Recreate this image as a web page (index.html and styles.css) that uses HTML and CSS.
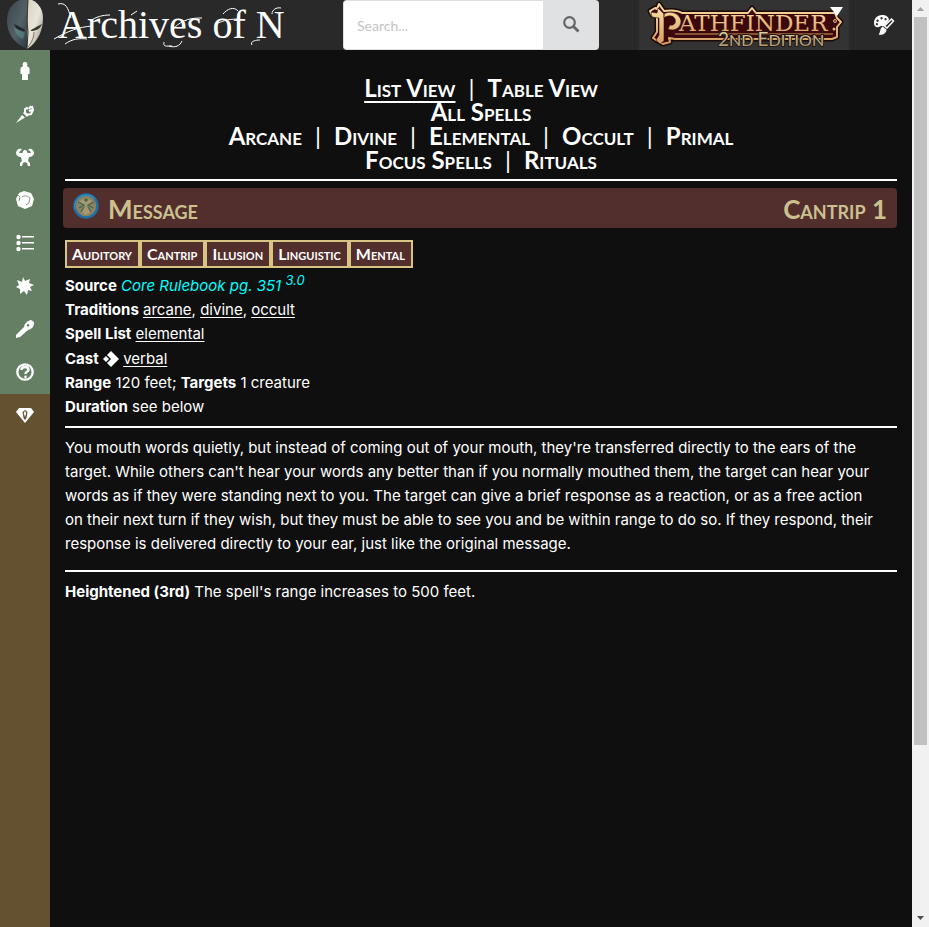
FILE: index.html
```html
<!DOCTYPE html>
<html lang="en">
<head>
<meta charset="utf-8">
<title>Message - Spells - Archives of Nethys</title>
<meta name="viewport" content="width=device-width, initial-scale=1">
<link rel="stylesheet" href="styles.css">
</head>
<body>
<div class="page">
  <header class="topbar">
    <a class="brand" href="#">
      <svg class="mask" viewBox="0 0 50 50" aria-hidden="true">
        <defs>
          <linearGradient id="dark" x1="0" y1="0" x2="1" y2="1"><stop offset="0" stop-color="#39464c"/><stop offset=".55" stop-color="#536167"/><stop offset="1" stop-color="#26383c"/></linearGradient>
          <linearGradient id="pale" x1="0" y1="0" x2="1" y2="1"><stop offset="0" stop-color="#d8d2c3"/><stop offset=".5" stop-color="#e9e5da"/><stop offset="1" stop-color="#8f8676"/></linearGradient>
        </defs>
        <path fill="url(#dark)" d="M28 0H20C12 3 7 10 7 21c0 11 6 22 20 28z"/>
        <path fill="url(#pale)" d="M28 0h4c7 3 11 10 11 18 0 12-5 24-16 31z"/>
        <path fill="#1c2325" d="M14 24l4 2 7 4v1c-5 0-9-2-11-7z"/>
        <path fill="#3d352b" d="M42 24l-4 2-7 4v1c5 0 9-2 11-7z"/>
        <path fill="#5d9496" d="M14 28l11 5-2 6c-5-2-8-6-9-11z" opacity=".55"/>
        <path fill="none" stroke="#3a3430" d="M28 0l-1 20 1 12-1 17"/>
        <path fill="none" stroke="#7d7465" d="M34 32c0 5-2 10-6 15"/>
      </svg>
      <span class="brand-name">Archives of N<svg class="swashes" viewBox="0 0 230 50" aria-hidden="true"><path d="M4 2c8-2 10 4 13 14M0 37c14-8 25-12 38-13M11 42c7-5 14-6 22-5M36 19c6-4 12-6 20-6M77 13l6-4M118 44c-6 0-9 1-8-4M120 26c9-9 18-10 28-10M128 39c-2 5-7 7-13 5M184 9c-4-5-11-2-15 3M162 22c8-4 14-5 24-5M218 12c0-4 4-7 9-6M198 43c-2-3 2-5 8-5"/></svg></span>
    </a>
    <form class="search" role="search" onsubmit="return false">
      <input type="search" aria-label="Search" placeholder="Search...">
      <button type="submit" aria-label="Search">
        <svg viewBox="0 0 18 18" aria-hidden="true"><circle cx="7.500" cy="6.500" r="5.300" fill="none" stroke="#666" stroke-width="2.200"/><path d="M11.500 10.500l5 5" stroke="#666" stroke-width="2.800"/></svg>
      </button>
    </form>
    <a class="edition" href="#">
      <svg viewBox="0 0 210 50" role="img" aria-label="Pathfinder 2nd Edition">
        <defs>
          <linearGradient id="gold" x1="0" y1="0" x2="0" y2="1"><stop offset="0" stop-color="#fbdfa4"/><stop offset="1" stop-color="#d39c60"/></linearGradient>
          <linearGradient id="stone" x1="0" y1="0" x2="0" y2="1"><stop offset="0" stop-color="#eee2bd"/><stop offset="1" stop-color="#9f8a66"/></linearGradient>
        </defs>
        <path fill="#3b080b" stroke="#1c0908" stroke-width="5" stroke-linejoin="round" d="M20 4l5 7c7-1 13-1 18 2h66l4-5 4 5h79l2 5 4 4-4 5v10l-5 2H36l-6-1 1 4-7 2-7-4-3-2 4-6V17l-5-2-2-4 5-3 2 1z"/>
        <path fill="#3b080b" stroke="url(#gold)" stroke-width="2" stroke-linejoin="round" d="M20 4l5 7c7-1 13-1 18 2h66l4-5 4 5h79l2 5 4 4-4 5v10l-5 2H36l-6-1 1 4-7 2-7-4-3-2 4-6V17l-5-2-2-4 5-3 2 1z"/>
        <path fill="none" stroke="#d59b5d" d="M36 34h158"/>
        <path fill="url(#gold)" stroke="#35100c" stroke-width=".6" d="M19 8l6 6v27l-4 3-4-4 3-5V18l-7-1-1-5 6 1zM25 14c6-4 16-1 17 7 0 7-7 11-13 8l2-4c5 1 6-3 5-6-2-4-7-4-11-1z"/>
        <circle cx="196" cy="21" r="1.500" fill="#5c302a" stroke="#ddb079"/>
        <circle cx="195" cy="29" r="1.500" fill="#e5b77b"/>
        <text class="edition-title" x="40" y="31">ATHFINDER</text>
        <text class="edition-sub" x="79" y="46"><tspan class="cap">2</tspan>ND <tspan class="cap">E</tspan>DITION</text>
        <path fill="#fff" d="M191 7h13l-6 9z"/>
      </svg>
    </a>
    <button class="theme" type="button" aria-label="Change theme">
      <svg viewBox="0 0 22 22" aria-hidden="true">
        <path fill="#fff" fill-rule="evenodd" d="M9 1C4 1 1 5 1 9c0 3 2 5 5 4 3-2 3 0 5-1l5-6c0-3-3-5-7-5zM4.500 5.500a1.200 1.200 0 1 0 .1 0zM8.500 3a1.200 1.200 0 1 0 .1 0zM3.800 9a1.100 1.100 0 1 0 .1 0zM12.500 4a1.100 1.100 0 1 0 .1 0z"/>
        <path fill="#292929" stroke="#fff" stroke-width="1.500" d="M18.500 5l2 2-6.500 7-2.500-2z"/>
        <path fill="#fff" d="M9.500 12.500l4 3c0 4-4 6-8 5 2-1 1-6 4-8z"/>
      </svg>
    </button>
  </header>
  <div class="body">
    <nav class="sidebar" aria-label="Sections">
      <div class="group rules">
        <a href="#" aria-label="Character"><svg viewBox="0 0 18 18"><circle cx="9" cy="2.400" r="2.400"/><path d="M7 4h4l2.500 2v6H12v6H6v-6H4.500V6z"/></svg></a>
        <a href="#" aria-label="Equipment"><svg viewBox="0 0 18 18"><path d="M0 18l6-8 3 2.500z"/><path d="M7 8l4 4 1.500-2L9 6z"/><path fill="none" stroke="#fff" stroke-width="2" d="M9 9V4l2-1 1 1M10 10l5-1 2-4-1-4M13 4l2-3M13 6l3-1"/></svg></a>
        <a href="#" aria-label="Monsters"><svg viewBox="0 0 18 18"><path d="M9 2c1.500 0 2 1 2.500 3L15 5l-1-2-2-1c2-3 6 0 6 3 0 2-2 4-5 4l-1 4 2 2v3h-2l-1-3-2-1-2 1-1 3H4v-3l2-2-1-4C2 9 0 7 0 5c0-3 4-6 6-3L4 3 3 5l3.500 0C7 3 7.500 2 9 2z"/></svg></a>
        <a href="#" aria-label="Rules"><svg viewBox="0 0 18 18"><path d="M8 0l7 2 3 6-2 7-7 3-7-3-2-7 3-6z"/><path fill="none" stroke="#647f64" stroke-width=".8" d="M6 6c3-2 6-1 8 1l-1 5-3 2M2 4l2 2-1 4"/></svg></a>
        <a href="#" aria-label="Lists"><svg viewBox="0 0 18 18"><circle cx="2.500" cy="3" r="2.200"/><circle cx="2.500" cy="9" r="2.200"/><circle cx="2.500" cy="15" r="2.200"/><path d="M6 2h12v1.500H6zM6 8h12v1.500H6zM6 14h12v1.500H6z"/></svg></a>
        <a href="#" aria-label="Spells"><svg viewBox="0 0 18 18"><path d="M7 0l2 4 5-2-1 4 5 2-4 2 2 4-4-1-1 5-3-4-4 3 0-5-4-2 3-2-2-5 5 2z"/></svg></a>
        <a href="#" aria-label="Tools"><svg viewBox="0 0 18 18"><path fill-rule="evenodd" d="M0 18v-3l8-8c1-4 3-6 7-7l3 2c0 5-2 7-6 8l-8 7zM12 4a1.300 1.300 0 1 0 .1 0z"/></svg></a>
        <a href="#" aria-label="Help"><svg viewBox="0 0 18 18"><circle cx="9" cy="9" r="7.700" fill="none" stroke="#fff" stroke-width="2.300"/><path fill="none" stroke="#fff" stroke-width="2.400" d="M5.500 7c0-4 7-4 7 0 0 2-3 1-3 4"/><circle cx="9.500" cy="13.700" r="1.300"/></svg></a>
      </div>
      <a href="#" aria-label="Support"><svg viewBox="0 0 18 18"><path fill-rule="evenodd" d="M3 2h12l3 4-9 11L0 6zM9 4L6.500 6l1 6L9 14l1.500-2 1-6zM9 5l1.300 2L9 11 7.700 7z"/></svg></a>
    </nav>
    <main class="content">
      <nav class="views" aria-label="Spell lists">
        <div><a class="current" href="#">List View</a><i>|</i><a href="#">Table View</a></div>
        <div><a href="#">All Spells</a></div>
        <div><a href="#">Arcane</a><i>|</i><a href="#">Divine</a><i>|</i><a href="#">Elemental</a><i>|</i><a href="#">Occult</a><i>|</i><a href="#">Primal</a></div>
        <div><a href="#">Focus Spells</a><i>|</i><a href="#">Rituals</a></div>
      </nav>
      <hr class="top-rule">
      <h1 class="title">
        <svg viewBox="0 0 26 26" aria-hidden="true"><circle cx="13" cy="13" r="11.500" fill="#8f8062" stroke="#1d6fa8" stroke-width="2.500"/><path fill="none" stroke="#309bd0" d="M2 16a11.500 11.500 0 0 1 20-10"/><path fill="#a99772" d="M6 8l7-3 6 3-6 6zM11 14l4 0 3 5-5 3-5-3z"/><path fill="none" stroke="#3c6b4c" stroke-width="1.300" d="M5 9l6 3-5 3M8 19l3-5M21 9l-6 3 5 3M18 19l-3-5M13 5v4M11 7h4"/></svg>
        <a href="#">Message</a>
        <span class="level">Cantrip 1</span>
      </h1>
      <div class="traits"><a href="#">Auditory</a><a href="#">Cantrip</a><a href="#">Illusion</a><a href="#">Linguistic</a><a href="#">Mental</a></div>
      <div class="facts">
        <div><b>Source</b> <a class="source" href="#">Core Rulebook pg. 351</a> <sup><a class="source" href="#">3.0</a></sup></div>
        <div><b>Traditions</b> <a href="#">arcane</a>, <a href="#">divine</a>, <a href="#">occult</a></div>
        <div><b>Spell List</b> <a href="#">elemental</a></div>
        <div class="cast"><b>Cast</b> <svg class="action" viewBox="0 0 16 16" role="img" aria-label="Single Action"><path d="M8 0l8 8-8 8-4-4 4-4-4-4z"/><path d="M3 5l3 3-3 3-3-3z"/></svg> <a href="#">verbal</a></div>
        <div><b>Range</b> 120 feet; <b>Targets</b> 1 creature</div>
        <div><b>Duration</b> see below</div>
      </div>
      <hr>
      <p class="description">You mouth words quietly, but instead of coming out of your mouth, they're transferred directly to the ears of the<br> target. While others can't hear your words any better than if you normally mouthed them, the target can hear your<br> words as if they were standing next to you. The target can give a brief response as a reaction, or as a free action<br> on their next turn if they wish, but they must be able to see you and be within range to do so. If they respond, their<br> response is delivered directly to your ear, just like the original message.</p>
      <hr>
      <p><b>Heightened (3rd)</b> The spell's range increases to 500 feet.</p>
    </main>
  </div>
</div>
<div class="scrollbar" aria-hidden="true">
  <svg viewBox="0 0 17 17"><path fill="#a3a3a3" d="M5 11h7L8.500 7z"/></svg>
  <div class="track"><div class="thumb"></div></div>
  <svg viewBox="0 0 17 17"><path fill="#505050" d="M5 6h7l-3.500 4z"/></svg>
</div>
</body>
</html>
```

FILE: styles.css
```css
* { box-sizing: border-box; }

body {
  margin: 0;
  min-height: 100vh;
  display: flex;
  background: #0f0f0f;
  color: #fff;
  font: 15px/24px Inter, "Open Sans", sans-serif;
}

a { color: inherit; }
svg { display: block; }
button { border: 0; padding: 0; cursor: pointer; }

.page {
  flex: 1;
  min-width: 0;
  display: flex;
  flex-direction: column;
}

.topbar {
  height: 50px;
  display: grid;
  grid-template-columns: 343px minmax(180px, 256px) 1fr 210px 63px;
  background: #292929;
}
.brand {
  display: flex;
  align-items: center;
  text-decoration: none;
}
.mask { width: 50px; height: 50px; }
.brand-name {
  position: relative;
  padding-left: 8px;
  white-space: nowrap;
  font: 40px/46px "Liberation Serif", serif;
}
.swashes {
  position: absolute;
  left: 4px;
  top: 0;
  width: 230px;
  height: 50px;
  fill: none;
  stroke: #fff;
  stroke-width: 1;
}

.search { display: flex; }
.search input {
  flex: 1;
  min-width: 0;
  border: 1px solid #dedede;
  border-right: 0;
  border-radius: 4px 0 0 4px;
  padding: 0 13px;
  background: #fff;
  color: #333;
  font: 14px Lato, sans-serif;
}
.search input::placeholder { color: #c4c4c4; }
.search button {
  width: 56px;
  display: grid;
  place-items: center;
  border-radius: 0 4px 4px 0;
  background: #e0e1e2;
}
.search button svg { width: 18px; height: 18px; }

.edition {
  grid-column: 4;
  background: #333;
}
.edition svg { width: 210px; height: 50px; }
.edition text { font-family: "DejaVu Serif", serif; }
.edition-title {
  fill: url(#gold);
  font-size: 23px;
}
.edition-sub {
  fill: url(#stone);
  stroke: #241a14;
  stroke-width: 2;
  paint-order: stroke;
  font-size: 16px;
}
.edition .edition-sub { font-family: Lato, sans-serif; }
.cap { font-size: 19px; }

.theme {
  display: grid;
  place-items: center;
  padding-left: 6px;
  background: none;
}
.theme svg { width: 22px; height: 22px; }

.body {
  flex: 1;
  display: flex;
}
.sidebar {
  width: 50px;
  flex: none;
  background: #645130;
}
.group { background: #647f64; }
.sidebar a {
  height: 43px;
  display: grid;
  place-items: center;
  padding-bottom: 1px;
}
.sidebar svg {
  width: 18px;
  height: 18px;
  fill: #fff;
}

.content {
  flex: 1;
  min-width: 0;
  padding: 26px 15px;
}
.views,
.title,
.traits {
  font-family: Lato, "Open Sans", sans-serif;
  font-weight: 700;
  font-variant: small-caps;
}
.views {
  text-align: center;
  font-size: 24px;
}
.views a { text-decoration: none; }
.views .current {
  text-decoration: underline;
  text-decoration-thickness: 2px;
  text-underline-offset: 4px;
}
.views i {
  margin: 0 13px;
  font-style: normal;
  font-weight: 400;
}

hr {
  height: 2px;
  margin: 7px 0 8px;
  border: 0;
  background: #fff;
}
.title {
  height: 40px;
  display: flex;
  gap: 9px;
  margin: 0 0 12px;
  margin-left: -2px;
  padding: 0 10px;
  border-radius: 4px;
  background: #522e2c;
  color: #cbc18f;
  font-size: 26px;
  line-height: 42px;
}
.title svg {
  width: 26px;
  height: 26px;
  margin-top: 5px;
}
.title a { text-decoration: none; }
.level { margin-left: auto; }
.top-rule { margin-bottom: 7px; }

.traits {
  display: flex;
  flex-wrap: wrap;
  margin-bottom: 6px;
  font-size: 16px;
}
.traits a {
  border: 2px solid #d8c483;
  padding: 0 6px 0 5px;
  background: #522e2c;
  text-decoration: none;
}
.facts a { text-underline-offset: 2px; }
.facts .source {
  color: #00ffff;
  font-style: italic;
  text-decoration: none;
}
sup {
  font-size: 13px;
  line-height: 0;
}
.cast { line-height: 25px; }
.action {
  width: 16px;
  height: 16px;
  display: inline-block;
  vertical-align: -3px;
  fill: #fff;
}
p { margin: 0; }
.description { margin-bottom: 14px; }

.scrollbar {
  width: 17px;
  flex: none;
  display: flex;
  flex-direction: column;
  background: #f1f1f1;
}
.scrollbar svg { width: 17px; height: 17px; }
.track { flex: 1; }
.thumb {
  height: 81.5%;
  margin: 0 2px;
  background: #c1c1c1;
}
```
